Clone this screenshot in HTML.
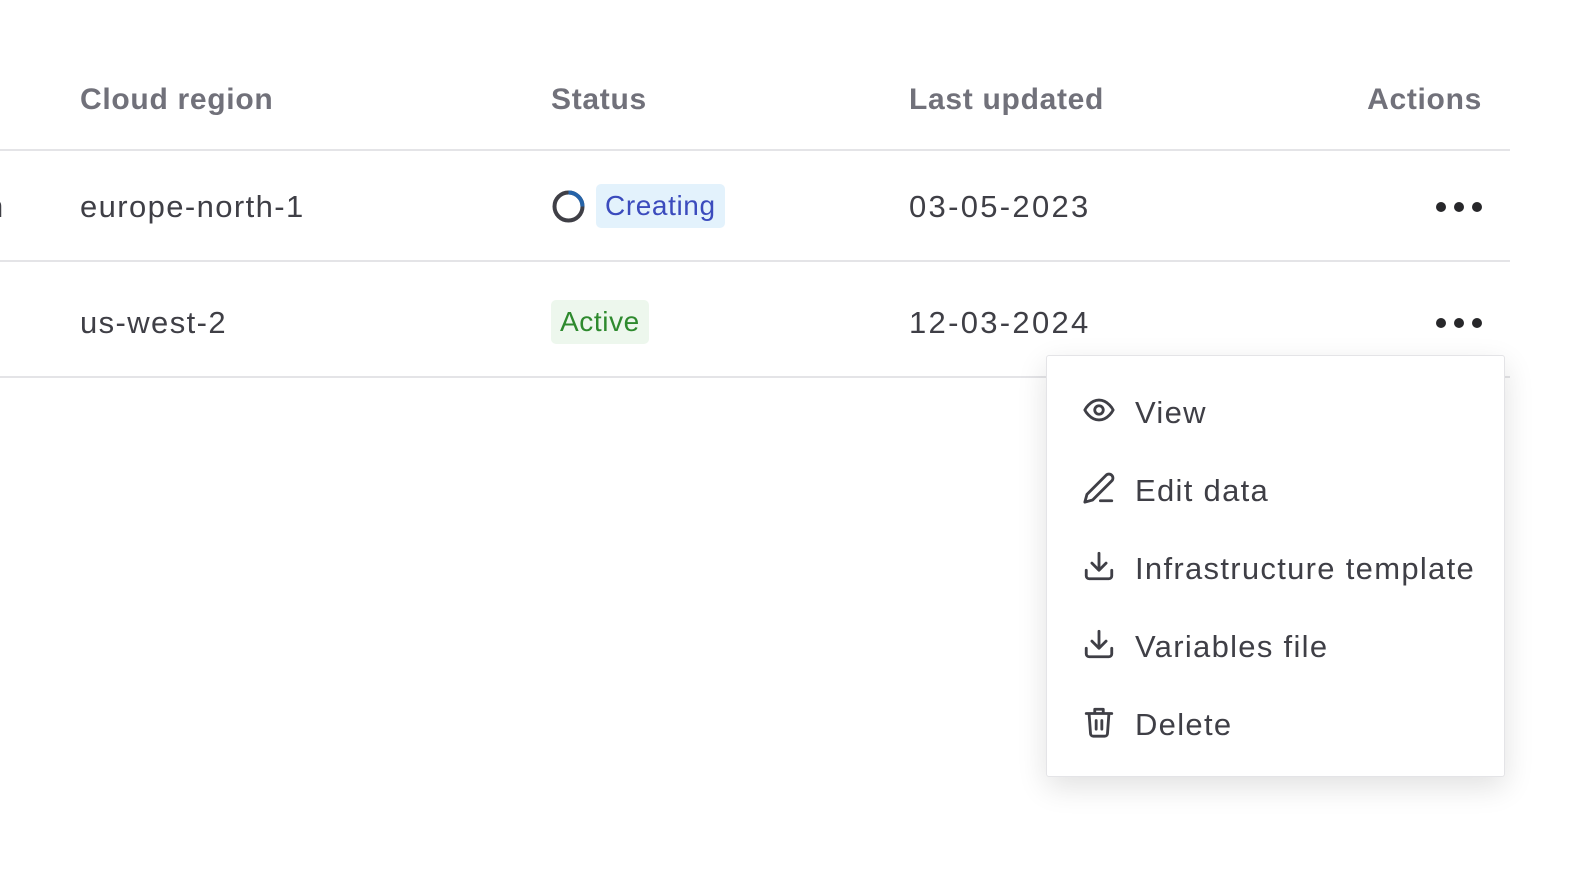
<!DOCTYPE html>
<html><head><style>
body{margin:0;width:1580px;height:888px;background:#fff;font-family:"Liberation Sans",sans-serif;position:relative;overflow:hidden}
.t{position:absolute;white-space:nowrap;line-height:1}
.h{font-size:30px;font-weight:bold;color:#71717a;top:85px;letter-spacing:0.7px}
.c{font-size:31px;color:#3f3f46;letter-spacing:1.4px}
.d{letter-spacing:2.3px}
.line{position:absolute;left:0;width:1510px;height:2px;background:#e4e4e7}
.dots{position:absolute;left:1436px;width:48px;height:10px}
.dots i{position:absolute;top:0;width:10px;height:10px;border-radius:50%;background:#27272a}
.badge{position:absolute;border-radius:5px;font-size:28px;line-height:44px;padding:0 9px;letter-spacing:0.6px}
.menu{position:absolute;left:1046px;top:355px;width:457px;height:420px;border:1px solid #e4e4e7;border-radius:3px;background:#fff;box-shadow:0 10px 30px rgba(0,0,0,.12)}
.mi{position:absolute;left:35px;height:40px}
.mi svg{position:absolute;left:0;top:2px}
.mi span{position:absolute;left:53px;top:4px;font-size:31px;color:#3f3f46;white-space:nowrap;letter-spacing:1.3px}
</style></head><body>
<div class="t h" style="left:80px">Cloud region</div>
<div class="t h" style="left:551px">Status</div>
<div class="t h" style="left:909px">Last updated</div>
<div class="t h" style="right:98px">Actions</div>
<div class="line" style="top:149px"></div>
<div class="t c" style="left:-14px;top:191px;width:17px;overflow:hidden">n</div>
<div class="t c" style="left:80px;top:191px">europe-north-1</div>
<svg style="position:absolute;left:551px;top:189px" width="35" height="35" viewBox="0 0 35 35"><circle cx="17.5" cy="17.5" r="14" fill="none" stroke="#3f3f46" stroke-width="4"/><path d="M17.5 3.5 A14 14 0 0 1 31.5 17.5" fill="none" stroke="#2563a8" stroke-width="4"/></svg>
<div class="badge" style="left:596px;top:184px;background:#e3f2fc;color:#3b4bbd">Creating</div>
<div class="t c d" style="left:909px;top:191px">03-05-2023</div>
<div class="dots" style="top:202px"><i style="left:0"></i><i style="left:18px"></i><i style="left:36px"></i></div>
<div class="line" style="top:260px"></div>
<div class="t c" style="left:80px;top:307px">us-west-2</div>
<div class="badge" style="left:551px;top:300px;background:#edf7ed;color:#2e8a2e">Active</div>
<div class="t c d" style="left:909px;top:307px">12-03-2024</div>
<div class="dots" style="top:318px"><i style="left:0"></i><i style="left:18px"></i><i style="left:36px"></i></div>
<div class="line" style="top:376px"></div>
<div class="menu">
<div class="mi" style="top:35px"><svg width="34" height="34" viewBox="0 0 24 24" fill="none" stroke="#3f3f46" stroke-width="2" stroke-linecap="round" stroke-linejoin="round"><path d="M2 12s3.5-7 10-7 10 7 10 7-3.5 7-10 7S2 12 2 12z"/><circle cx="12" cy="12" r="3"/></svg><span>View</span></div>
<div class="mi" style="top:113px"><svg width="34" height="34" viewBox="0 0 24 24" fill="none" stroke="#3f3f46" stroke-width="2" stroke-linecap="round" stroke-linejoin="round"><path d="M17 3a2.8 2.8 0 0 1 4 4L7.5 20.5 2 22l1.5-5.5z"/><path d="M13 21h8"/></svg><span>Edit data</span></div>
<div class="mi" style="top:191px"><svg width="34" height="34" viewBox="0 0 24 24" fill="none" stroke="#3f3f46" stroke-width="2" stroke-linecap="round" stroke-linejoin="round"><path d="M12 3v11M7 10l5 5 5-5"/><path d="M3 15v4a2 2 0 0 0 2 2h14a2 2 0 0 0 2-2v-4"/></svg><span>Infrastructure template</span></div>
<div class="mi" style="top:269px"><svg width="34" height="34" viewBox="0 0 24 24" fill="none" stroke="#3f3f46" stroke-width="2" stroke-linecap="round" stroke-linejoin="round"><path d="M12 3v11M7 10l5 5 5-5"/><path d="M3 15v4a2 2 0 0 0 2 2h14a2 2 0 0 0 2-2v-4"/></svg><span>Variables file</span></div>
<div class="mi" style="top:347px"><svg width="34" height="34" viewBox="0 0 24 24" fill="none" stroke="#3f3f46" stroke-width="2" stroke-linecap="round" stroke-linejoin="round"><path d="M3 6h18M9 6V3h6v3M5 6l1 14a2 2 0 0 0 2 2h8a2 2 0 0 0 2-2l1-14"/><path d="M10 11v6M14 11v6"/></svg><span>Delete</span></div>
</div>
</body></html>
